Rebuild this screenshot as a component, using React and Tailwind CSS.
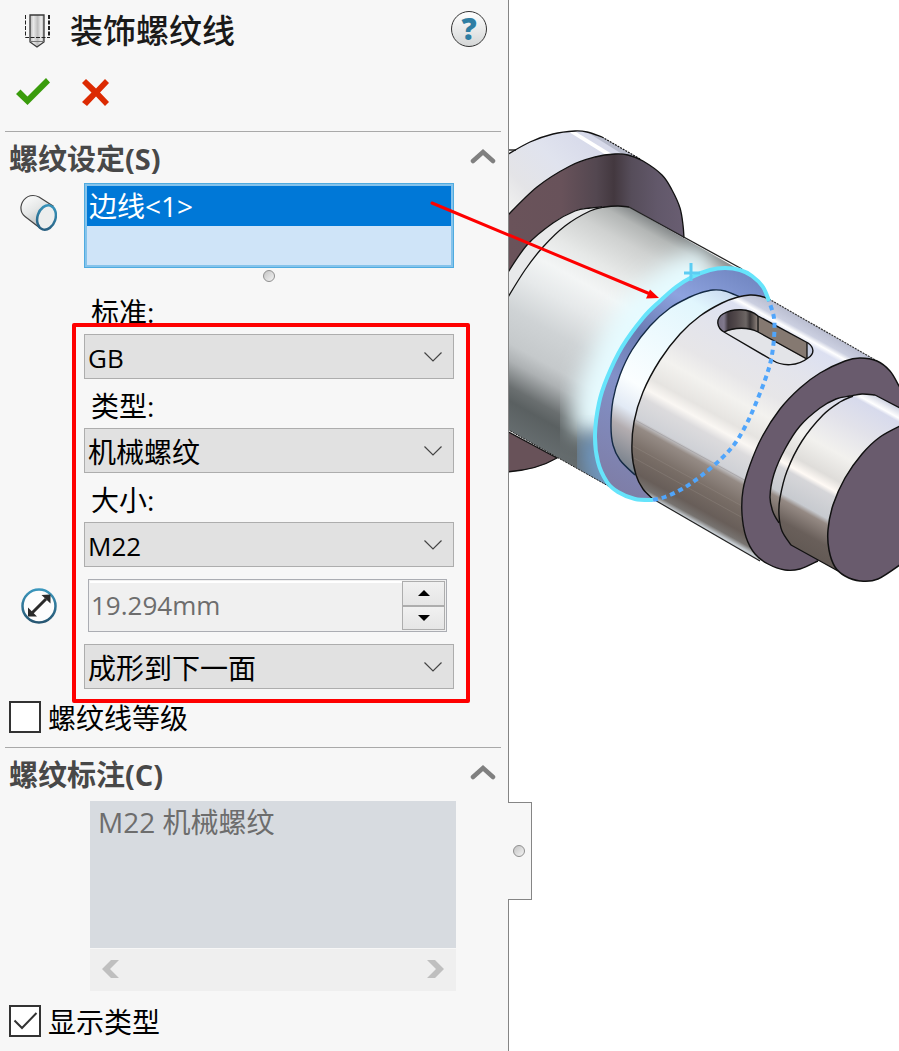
import React, { useState } from "react";

/* Smooth curve through a list of points; `cmd` is the command that reaches the first one. */
function curve(pts, cmd = "M") {
  let d = `${cmd}${pts[0][0]} ${pts[0][1]}`;
  for (let i = 0; i < pts.length - 1; i++) {
    const p0 = pts[i - 1] || pts[i];
    const p1 = pts[i];
    const p2 = pts[i + 1];
    const p3 = pts[i + 2] || p2;
    d += `C${p1[0] + (p2[0] - p0[0]) / 6} ${p1[1] + (p2[1] - p0[1]) / 6} ${p2[0] - (p3[0] - p1[0]) / 6} ${p2[1] - (p3[1] - p1[1]) / 6} ${p2[0]} ${p2[1]}`;
  }
  return d;
}
const back = (pts) => [...pts].reverse();

const flangeRear = [[505, 156], [530, 142], [553, 134], [575, 131], [587, 132], [602, 137]];
const flangeFront = [[505, 218], [537, 187], [570, 166], [595, 157], [615, 154], [628, 155], [643, 161], [662, 175], [672, 190], [680, 208], [683, 225], [684, 238]];
const hubEdge = [[505, 277], [527, 245], [553, 223], [575, 211], [590, 208], [602, 207]];
const bodyEdge = [[505, 302], [525, 270], [543, 247], [565, 226], [590, 211], [605, 207], [618, 206], [629, 207]];
const ring = [[769, 301], [763, 287], [752, 276], [740, 270], [725, 268], [710, 270], [692, 277], [676, 287], [660, 301], [643, 318], [622, 347], [607, 378], [599, 403], [595, 435], [598, 462], [607, 482], [618, 492], [635, 499], [653, 500]];
const hidden = [[653, 500], [665, 497], [682, 489], [701, 476], [722, 458], [736, 442], [747, 423], [756, 403], [765, 380], [771, 360], [774, 338], [774, 318], [769, 301]];
const neck = [[740, 297], [725, 291], [713, 290], [700, 293], [690, 297], [670, 308], [650, 326], [632, 350], [620, 375], [613, 400], [611, 426], [613, 445], [620, 460], [635, 475]];
const shaftRear = [[769, 299], [760, 296], [750, 295], [738, 297], [722, 303], [700, 316], [680, 334], [660, 360], [643, 392], [634, 422], [632, 452], [636, 475], [643, 489], [653, 499]];
const shaftFace = [[904, 396], [899, 386], [890, 371], [877, 361], [860, 358], [845, 361], [820, 373], [800, 388], [780, 409], [762, 437], [750, 465], [743, 490], [742, 514], [746, 537], [755, 554], [768, 564], [785, 570], [800, 569], [818, 561]];
const stubNeck = [[875, 395], [862, 394], [850, 396], [836, 399], [820, 408], [800, 426], [785, 449], [774, 474], [770, 497], [773, 512], [779, 523]];
const stubRear = [[853, 396], [840, 402], [823, 415], [802, 441], [787, 471], [780, 498], [779, 515], [782, 531], [791, 545]];
const endFace = [[904, 424], [880, 437], [862, 454], [845, 478], [833, 505], [828, 530], [829, 550], [835, 567], [845, 576], [860, 581], [878, 579], [904, 562]];

const bodyShape = `${curve(bodyEdge)}${curve(ring.slice(3), "L")}L610 487L505 428Z`;
const ringShape = `${curve(ring)}${curve(back(shaftRear), "L")}Z`;
const neckShape = `${curve(neck)}${curve(back(shaftRear), "L")}Z`;
const shaftShape = `${curve(shaftRear)}L760 561${curve(back(shaftFace).slice(4), "L")}L877 361Z`;
const slotShape = "M724 332C717 328 715 319 723 314C733 308 749 308 758 316L808 343C814 347 815 354 808 358C798 366 783 367 772 360Z";

function Stops({ list }) {
  return list.map(([offset, color]) => <stop key={offset} offset={offset} stopColor={color} />);
}

function ShaftModel() {
  return (
    <svg viewBox="509 0 390 620" className="block h-auto w-full" role="img" aria-label="阶梯轴模型">
      <defs>
        <linearGradient id="rim" gradientUnits="userSpaceOnUse" x1="590" y1="140" x2="510" y2="220">
          <Stops list={[[0, "#d7daea"], [0.35, "#e0e3ee"], [0.7, "#e4e4e7"], [1, "#f4f4f2"]]} />
        </linearGradient>
        <linearGradient id="flange" gradientUnits="userSpaceOnUse" x1="509" y1="0" x2="684" y2="0">
          <Stops list={[[0, "#6a535a"], [0.3, "#68525a"], [0.5, "#534750"], [0.6, "#43383f"], [0.7, "#564d5a"], [0.85, "#62586a"], [1, "#695e72"]]} />
        </linearGradient>
        <linearGradient id="body" gradientUnits="userSpaceOnUse" x1="629" y1="207" x2="506" y2="428">
          <Stops list={[[0, "#85898a"], [0.05, "#b3b6b5"], [0.13, "#cfd1d0"], [0.25, "#e6e8e7"], [0.35, "#f3f5f5"], [0.45, "#e6e9ea"], [0.58, "#cfd3d5"], [0.7, "#c5c9cb"], [0.76, "#adb1b3"], [0.85, "#6a6f70"], [0.9, "#5a6061"], [1, "#656c6e"]]} />
        </linearGradient>
        <linearGradient id="ringFill" gradientUnits="userSpaceOnUse" x1="740" y1="270" x2="620" y2="495">
          <Stops list={[[0, "#7287c2"], [0.2, "#8ea3df"], [0.4, "#6b7cb4"], [0.6, "#8291c8"], [1, "#7e7da6"]]} />
        </linearGradient>
        <linearGradient id="neckFill" gradientUnits="userSpaceOnUse" x1="740" y1="292" x2="625" y2="480">
          <Stops list={[[0, "#c5d4ee"], [0.15, "#e1f6fd"], [0.6, "#fbfeff"], [0.72, "#e2eaf5"], [0.8, "#b3adb0"], [0.93, "#7f8690"], [1, "#647a8c"]]} />
        </linearGradient>
        <linearGradient id="shaft" gradientUnits="userSpaceOnUse" x1="769" y1="299" x2="657" y2="501">
          <Stops list={[[0, "#b9bdd0"], [0.05, "#cbcfe0"], [0.07, "#ffffff"], [0.09, "#dce0f1"], [0.22, "#e3e4ec"], [0.36, "#e7e6e8"], [0.45, "#f3f2ef"], [0.55, "#e6e4e1"], [0.6, "#faf7f3"], [0.64, "#dcdbdd"], [0.73, "#cfd1d6"], [0.76, "#958b85"], [0.85, "#786d66"], [0.94, "#685e59"], [0.98, "#777370"], [1, "#c5cbd0"]]} />
        </linearGradient>
        <linearGradient id="stub" gradientUnits="userSpaceOnUse" x1="875" y1="395" x2="791" y2="546">
          <Stops list={[[0, "#d0d3e2"], [0.05, "#ffffff"], [0.07, "#d7daec"], [0.22, "#e2e2ea"], [0.4, "#f2f1ee"], [0.54, "#dfddda"], [0.6, "#fffaf5"], [0.63, "#d6d6d9"], [0.76, "#c7cacf"], [0.79, "#958a84"], [0.9, "#695f5a"], [1, "#625954"]]} />
        </linearGradient>
        <linearGradient id="slotWall" gradientUnits="userSpaceOnUse" x1="718" y1="0" x2="758" y2="0">
          <Stops list={[[0, "#756e82"], [0.15, "#81798d"], [0.25, "#40383d"], [0.45, "#51484a"], [0.7, "#6c6664"], [0.8, "#3a3536"], [1, "#938780"]]} />
        </linearGradient>
        <filter id="glow" x="-30%" y="-30%" width="160%" height="160%">
          <feGaussianBlur stdDeviation="11" />
        </filter>
        <clipPath id="bodyClip"><path d={bodyShape} /></clipPath>
        <clipPath id="slotClip"><path d={slotShape} /></clipPath>
      </defs>

      {/* rear flange */}
      <path d={`${curve(flangeRear)}L643 161${curve(back(flangeFront.slice(0, 7)), "L")}Z`} fill="url(#rim)" />
      <path d="M569 132L576 132L612 154L606 155Z" fill="#fff" />
      <path d="M587 132L602 137L637 158L622 154Z" fill="#b7bbcb" />
      <path d="M505 430L557 458C540 468 524 471 505 472Z" fill="#685259" stroke="#111" strokeWidth="1.3" />
      <path d={`${curve(flangeFront)}L629 207${curve(back(hubEdge), "L")}Z`} fill="url(#flange)" />
      <path d={`${curve(hubEdge)}L629 207${curve(back(bodyEdge), "L")}Z`} fill="#e8e9ea" />
      <g fill="none" stroke="#111" strokeWidth="1.3">
        <path d={curve(flangeRear)} />
        <path d="M509 150L516 150" />
        <path d="M602 137L640 159" strokeDasharray="2 1" />
        <path d={curve(flangeFront)} />
        <path d={curve(hubEdge)} />
      </g>

      {/* large journal and its highlighted edge */}
      <path d={bodyShape} fill="url(#body)" />
      <g clipPath="url(#bodyClip)">
        <path d={curve(ring.slice(5, 14))} fill="none" stroke="#e6fbff" strokeWidth="48" filter="url(#glow)" />
        <path d={curve(ring.slice(13))} fill="none" stroke="#719ac4" strokeWidth="34" filter="url(#glow)" />
      </g>
      <path d={curve(bodyEdge)} fill="none" stroke="#111" strokeWidth="1.3" />
      <path d="M629 207L742 269" stroke="#222" strokeWidth="1.3" />
      <path d="M505 428L610 487" stroke="#222" strokeWidth="1" strokeDasharray="2 1" />
      <path d={ringShape} fill="url(#ringFill)" />
      <path d={neckShape} fill="url(#neckFill)" />
      <path d={curve(neck)} fill="none" stroke="#142a45" strokeWidth="1.4" />

      {/* keyed shaft */}
      <path d={shaftShape} fill="url(#shaft)" />
      <path d={curve(shaftRear)} fill="none" stroke="#111" strokeWidth="1.4" />
      <path d="M769 299L877 361" stroke="#333" strokeWidth="1.2" strokeDasharray="2 1" />
      <path d="M653 499L760 561" stroke="#222" strokeWidth="1.2" />
      <path d="M635 420L748 482" stroke="#aaa8ab" strokeWidth="1" />
      <g stroke="#a49b94" strokeWidth="1" opacity=".25">
        <path d="M633 446L742 506M634 458L743 518" />
      </g>
      <path d={slotShape} fill="#e3e4e8" />
      <g clipPath="url(#slotClip)">
        <path d="M712 300H758V332C749 327 734 327 724 333L712 333Z" fill="url(#slotWall)" />
        <path d="M758 310L807 342V360L758 332Z" fill="#857971" />
        <path d="M807 340H816V352L807 359Z" fill="#c5cce0" />
        <path d="M724 332C734 327 749 327 758 332L807 359M758 315V332M807 342V359" fill="none" stroke="#111" strokeWidth="1.3" />
      </g>
      <path d={slotShape} fill="none" stroke="#111" strokeWidth="1.4" />
      <path d={`${curve(shaftFace)}L904 561Z`} fill="#695b6d" />
      <path d={curve(shaftFace)} fill="none" stroke="#111" strokeWidth="1.4" />

      {/* front stub */}
      <path d={`${curve(stubNeck)}${curve(stubRear.slice(7), "L")}L838 571L904 562V410Z`} fill="url(#stub)" />
      <path d={curve(stubNeck)} fill="none" stroke="#111" strokeWidth="1.4" />
      <path d={curve(stubRear)} fill="none" stroke="#111" strokeWidth="1.4" />
      <path d="M875 395L904 410M791 545L838 571" stroke="#111" strokeWidth="1.3" />
      <path d={`${curve(endFace)}Z`} fill="#695b6d" stroke="#111" strokeWidth="1.5" />

      <path d={curve(ring)} fill="none" stroke="#66e4fb" strokeWidth="4" />
      <path d={curve(hidden)} fill="none" stroke="#50a5fb" strokeWidth="4" strokeDasharray="5 4" />
      <path d="M691 263V281M684 273H700" stroke="#5ccdf3" strokeWidth="3" />
    </svg>
  );
}

function ThreadIcon() {
  return (
    <svg viewBox="0 0 26 34" className="h-[34px] w-[26px]" aria-hidden="true">
      <defs>
        <linearGradient id="drill"><Stops list={[[0, "#bbb"], [0.25, "#e8e8e8"], [0.55, "#bdbdbd"], [0.8, "#eee"], [1, "#aaa"]]} /></linearGradient>
      </defs>
      <path d="M6 1H20V28L13 33L6 28Z" fill="url(#drill)" stroke="#3a3a3a" strokeWidth="1.300" />
      <path d="M6 27.500H20" stroke="#777" />
      <path d="M1.500 1V23.500H25" fill="none" stroke="#222" strokeDasharray="4 1.500" />
      <path d="M25 1V24" stroke="#222" strokeWidth="2" strokeDasharray="4 1.500" />
    </svg>
  );
}

function CylinderIcon() {
  return (
    <svg viewBox="0 0 38 38" className="h-[38px] w-[38px]" aria-hidden="true">
      <defs>
        <linearGradient id="cyl" x2="0.600" y2="1"><Stops list={[[0, "#fff"], [0.5, "#e5e7e7"], [1, "#b5b8b8"]]} /></linearGradient>
        <linearGradient id="cylRing" x2="0" y2="1"><Stops list={[[0, "#3793bb"], [1, "#285f80"]]} /></linearGradient>
      </defs>
      <path d="M14 1.500C6 1.500 1.500 9 2 15C2.200 19 4 21 6 22.500L21 34L34 12L20 3C18 2 16 1.500 14 1.500Z" fill="url(#cyl)" stroke="#444" strokeWidth="1.200" />
      <ellipse cx="27.500" cy="23.500" rx="9" ry="12.500" transform="rotate(18 27.500 23.500)" fill="#eceeee" stroke="url(#cylRing)" strokeWidth="2.500" />
    </svg>
  );
}

function DiameterIcon() {
  return (
    <svg viewBox="0 0 36 36" className="h-9 w-9" aria-hidden="true">
      <defs>
        <linearGradient id="dia" x2="0" y2="1"><Stops list={[[0, "#3b97bd"], [1, "#275672"]]} /></linearGradient>
      </defs>
      <circle cx="18" cy="18" r="16.500" fill="#fdfdfd" stroke="url(#dia)" strokeWidth="2.500" />
      <path d="M11 25L25 11" stroke="#2b2b2b" strokeWidth="3" />
      <path d="M29.500 6.500V15.500L20.500 7ZM7 28.500V19.500L16 28.500Z" fill="#2b2b2b" />
    </svg>
  );
}

function Grip() {
  return <span className="block size-3 rounded-full border border-[#8f8f8f] bg-linear-to-br from-[#c4c4c4] to-[#f4f4f4]" />;
}

function SectionHeader({ children, open, onToggle }) {
  return (
    <div className="flex h-[50px] items-center justify-between border-t border-[#a9a9a9] pt-1 pr-[5px] pl-1">
      <h2 className="text-[29px] leading-10 font-bold text-[#484848]">{children}</h2>
      <button type="button" onClick={onToggle} aria-expanded={open} aria-label="折叠" className="mb-[6px] block">
        <svg viewBox="0 0 26 16" className="block h-4 w-[26px]">
          <path d="M3 13L13 4L23 13" fill="none" stroke="#808080" strokeWidth="4.500" strokeLinecap="round" />
        </svg>
      </button>
    </div>
  );
}

function Combo({ id, label, options, latin = false }) {
  return (
    <div className="relative grid">
      <select
        id={id}
        aria-label={label}
        className={`h-[45px] w-full appearance-none rounded-none border border-[#adadad] bg-[#e1e1e1] pt-[2px] pr-10 pl-[3px] leading-10 text-black ${latin ? "text-[26px]" : "text-[28px]"}`}
      >
        {options.map((o) => <option key={o}>{o}</option>)}
      </select>
      <svg viewBox="0 0 18 10" className="pointer-events-none absolute top-[18px] right-3 h-[10px] w-[18px]" aria-hidden="true">
        <path d="M.5 .5L9 9L17.500 .5" fill="none" stroke="#444" strokeWidth="1.200" />
      </svg>
    </div>
  );
}

function FieldLabel({ htmlFor, children }) {
  return <label htmlFor={htmlFor} className="block h-[49px] pt-[5px] pl-[7px] text-[28px] leading-[45px] text-black">{children}</label>;
}

function CheckRow({ id, label, initial }) {
  const [checked, setChecked] = useState(initial);
  return (
    <div className="flex h-10 items-center gap-[7px] pl-[9px]">
      <span className="relative block size-8 shrink-0">
        <input
          id={id}
          type="checkbox"
          checked={checked}
          onChange={(e) => setChecked(e.target.checked)}
          className="block size-8 appearance-none border-2 border-[#333] bg-white"
        />
        {checked && (
          <svg viewBox="0 0 32 32" className="pointer-events-none absolute inset-0 size-8" aria-hidden="true">
            <path d="M5.500 15.500L13 23L27.500 8" fill="none" stroke="#333" strokeWidth="2" />
          </svg>
        )}
      </span>
      <label htmlFor={id} className="pt-[2px] text-[28px] leading-10 text-black">{label}</label>
    </div>
  );
}

export default function App() {
  const [openSettings, setOpenSettings] = useState(true);
  const [openCallout, setOpenCallout] = useState(true);
  const [size, setSize] = useState(19.294);

  return (
    <div className="relative flex min-h-screen bg-white font-['Open_Sans','Noto_Sans_CJK_SC',sans-serif]">
      <aside className="relative w-3/5 max-w-[509px] shrink-0 border-r border-[#858585] bg-[#f7f7f7]">
        <header className="h-[131px]">
          <div className="flex h-[62px] items-center pr-[21px] pl-6">
            <ThreadIcon />
            <h1 className="flex-1 pl-5 text-[33px] leading-10 font-medium text-[#1a1a1a]">装饰螺纹线</h1>
            <button type="button" aria-label="帮助" className="mb-1 flex size-9 items-center justify-center rounded-full border border-[#333] bg-linear-to-b from-white to-[#d5d7d7] text-[30px] leading-9 font-extrabold text-[#2f7ea3]">
              ?
            </button>
          </div>
          <div className="flex items-center gap-8 pt-3 pl-4">
            <button type="button" aria-label="确定">
              <svg viewBox="0 0 34 36" className="block h-9 w-[34px]"><path d="M0 20L4.500 15.500L11.500 22.500L30 4L34 8.500L11.500 31Z" fill="#3a9c0c" /></svg>
            </button>
            <button type="button" aria-label="取消">
              <svg viewBox="0 0 28 36" className="block h-9 w-7"><path d="M4 5L14 14.500L23 5L27 9L18 18.500L27 28L23 32L14 22.500L5 32L0 28L9.500 18.500L0 9Z" fill="#dc2a02" /></svg>
            </button>
          </div>
        </header>

        <div className="pr-[7px] pl-[5px]">
          <SectionHeader open={openSettings} onToggle={() => setOpenSettings(!openSettings)}>螺纹设定(S)</SectionHeader>
        </div>

        {openSettings && (
          <section className="pt-[2px]">
            <div className="grid grid-cols-[84px_1fr] pr-[54px]">
              <div className="pt-[11px] pl-[19px]"><CylinderIcon /></div>
              <ul role="listbox" aria-label="边线" className="h-[85px] border border-[#4fabe0] bg-[#cfe4f8] p-[2px] ring-2 ring-[#85c3eb] ring-inset">
                <li role="option" aria-selected="true" className="h-10 bg-[#0078d7] pl-[2px] text-[28px] leading-10 text-white">边线&lt;1&gt;</li>
              </ul>
            </div>
            <div className="flex justify-center pt-[2px] pr-[54px] pl-[84px]"><Grip /></div>

            <div className="relative grid grid-cols-[84px_1fr] pt-[3px] pr-[54px]">
              <div className="col-start-2">
                <FieldLabel htmlFor="standard">标准:</FieldLabel>
                <Combo id="standard" options={["GB", "ISO", "DIN"]} latin />
                <FieldLabel htmlFor="kind">类型:</FieldLabel>
                <Combo id="kind" options={["机械螺纹", "管螺纹"]} />
                <FieldLabel htmlFor="size">大小:</FieldLabel>
                <Combo id="size" options={["M22", "M20", "M24"]} latin />
              </div>
              <div className="self-center pl-[21px]"><DiameterIcon /></div>
              <div className="py-3 pr-[7px] pl-1">
                <div className="flex h-[53px] border border-[#abadb3] bg-[#f0f0f0] p-px">
                  <input
                    aria-label="螺纹直径"
                    readOnly
                    value={`${size.toFixed(3)}mm`}
                    className="w-full min-w-0 flex-1 border-t-2 border-white bg-transparent pb-1 pl-px text-[26px] leading-10 text-[#6d6d6d]"
                  />
                  <div className="grid w-[43px] grid-rows-2">
                    <button type="button" aria-label="增大" onClick={() => setSize(size + 1)} className="flex items-center justify-center border border-[#adadad] bg-linear-to-b from-[#f1f1f1] to-[#e5e5e5]">
                      <svg viewBox="0 0 12 6" className="h-[6px] w-3"><path d="M0 6L6 0L12 6Z" /></svg>
                    </button>
                    <button type="button" aria-label="减小" onClick={() => setSize(size - 1)} className="flex items-center justify-center border border-[#adadad] bg-linear-to-b from-[#f1f1f1] to-[#e5e5e5]">
                      <svg viewBox="0 0 12 6" className="h-[6px] w-3"><path d="M0 0H12L6 6Z" /></svg>
                    </button>
                  </div>
                </div>
              </div>
              <div className="col-start-2">
                <Combo id="end" label="终止条件" options={["成形到下一面", "给定深度", "通孔"]} />
              </div>
              <div className="pointer-events-none absolute top-[41px] right-[38px] -bottom-[14px] left-[72px] rounded-xs border-4 border-[#fe0000]" />
            </div>

            <div className="pt-2 pb-[10px]">
              <CheckRow id="grade" label="螺纹线等级" initial={false} />
            </div>
          </section>
        )}

        <div className="pr-[7px] pl-[5px]">
          <SectionHeader open={openCallout} onToggle={() => setOpenCallout(!openCallout)}>螺纹标注(C)</SectionHeader>
        </div>

        {openCallout && (
          <section className="pt-1">
            <div className="pr-[52px] pl-[90px]">
              <textarea
                aria-label="螺纹标注"
                readOnly
                defaultValue="M22 机械螺纹"
                className="block h-[147px] w-full resize-none bg-[#d7dbe0] px-2 py-px text-[28px] leading-10 text-[#6d6d6d]"
              />
              <div className="mt-px flex h-[42px] items-center justify-between bg-[#efefef] px-3 pb-[2px]">
                <button type="button" aria-label="向左滚动">
                  <svg viewBox="0 0 17 18" className="block h-[18px] w-[17px]"><path d="M9 0H17L8 9L17 18H9L0 9Z" fill="#bfbfbf" /></svg>
                </button>
                <button type="button" aria-label="向右滚动">
                  <svg viewBox="0 0 17 18" className="block h-[18px] w-[17px]"><path d="M8 0H0L9 9L0 18H8L17 9Z" fill="#bfbfbf" /></svg>
                </button>
              </div>
            </div>
            <div className="pt-[10px] pb-[10px]">
              <CheckRow id="showType" label="显示类型" initial={true} />
            </div>
          </section>
        )}

        <button type="button" aria-label="面板手柄" className="absolute top-[802px] -right-6 flex h-[98px] w-6 items-center justify-center border border-l-0 border-[#858585] bg-[#f7f7f7] pr-[2px]">
          <Grip />
        </button>
        <span className="absolute top-[803px] -right-px h-24 w-px bg-[#f7f7f7]" />
      </aside>

      <main className="min-w-0 flex-1 overflow-hidden">
        <ShaftModel />
      </main>

      <svg viewBox="0 0 232 100" className="pointer-events-none absolute top-[200px] left-[430px] h-[100px] w-[232px]" aria-hidden="true">
        <path d="M2 3L219 93.500" stroke="#fe0000" strokeWidth="3" strokeLinecap="round" />
        <path d="M229 98L216 98.500L220 89.500Z" fill="#fe0000" />
      </svg>
    </div>
  );
}
